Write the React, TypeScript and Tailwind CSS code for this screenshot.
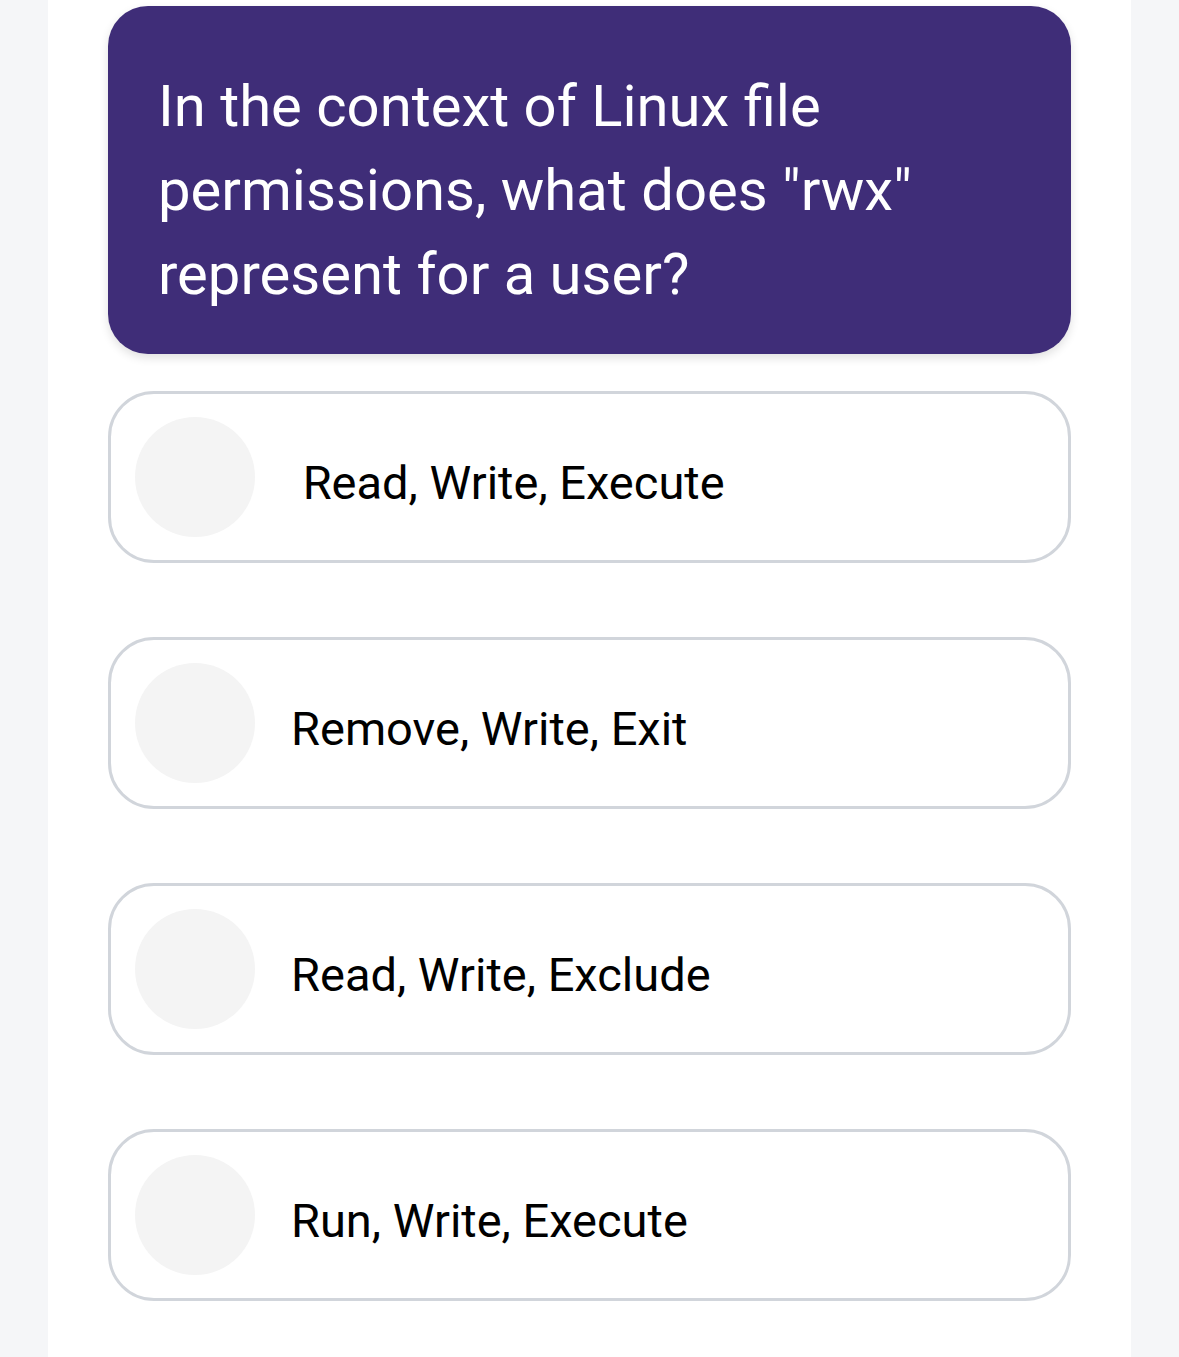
import React from 'react';

const options = [' Read, Write, Execute', 'Remove, Write, Exit', 'Read, Write, Exclude', 'Run, Write, Execute'];

export default function App() {
  return (
    <div className="min-h-[1357px] bg-[#f5f6f8]" style={{ fontFamily: 'Roboto, "Noto Sans", sans-serif' }}>
      <div className="mx-[48px] min-h-[1357px] bg-white px-[60px] pt-[6px]">
        {/* Question card */}
        <div className="rounded-[40px] bg-[#3f2d78] pl-[50px] pr-[40px] pt-[58px] pb-[38px] shadow-[0_4px_10px_rgba(0,0,0,0.12)]">
          <h1 className="text-[58px] leading-[84px] font-normal text-white">
            In the context of Linux file permissions, what does "rwx" represent for a user?
          </h1>
        </div>

        {/* Options */}
        <div className="mt-[37px] flex flex-col gap-[74px]">
          {options.map((opt) => (
            <div key={opt} className="flex h-[172px] items-center rounded-[46px] border-[3px] border-[#d1d5db] pl-[24px]">
              <div className="h-[120px] w-[120px] shrink-0 rounded-full bg-[#f4f4f4]" />
              <span className="ml-[36px] whitespace-pre pt-[10px] text-[47px] leading-none text-black">{opt}</span>
            </div>
          ))}
        </div>
      </div>
    </div>
  );
}
